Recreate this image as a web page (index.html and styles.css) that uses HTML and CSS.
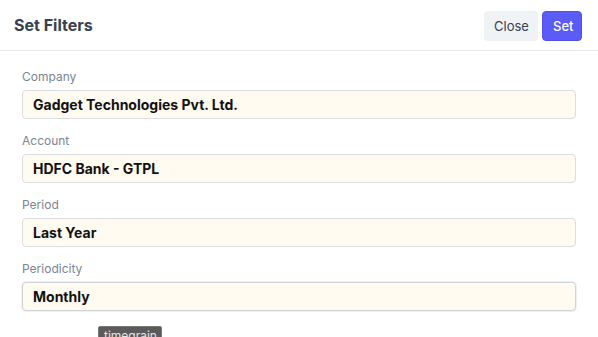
FILE: index.html
```html
<!DOCTYPE html>
<html lang="en">
<head>
  <meta charset="UTF-8" />
  <title>Set Filters</title>
  <link rel="stylesheet" href="styles.css">
</head>
<body>
  <div class="modal">
    <div class="modal-header">
      <h2>Set Filters</h2>
      <div class="actions">
        <button class="btn btn-close">Close</button>
        <button class="btn btn-set">Set</button>
      </div>
    </div>
    <div class="modal-body">
      <div class="field">
        <label>Company</label>
        <div class="input">Gadget Technologies Pvt. Ltd.</div>
      </div>
      <div class="field">
        <label>Account</label>
        <div class="input">HDFC Bank - GTPL</div>
      </div>
      <div class="field">
        <label>Period</label>
        <div class="input">Last Year</div>
      </div>
      <div class="field">
        <label>Periodicity</label>
        <div class="input focused">Monthly</div>
      </div>
    </div>
    <div class="tooltip">timegrain</div>
  </div>
</body>
</html>
```

FILE: styles.css
```css
body {
  margin: 0;
  font-family: Inter, 'Liberation Sans', sans-serif;
  background: #fff;
  width: 598px;
  height: 337px;
  overflow: hidden;
}
.modal {
  position: relative;
  height: 337px;
}
.modal-header {
  height: 50px;
  border-bottom: 1px solid #e5e7eb;
  display: flex;
  align-items: center;
  justify-content: space-between;
  padding: 0 16px 0 14px;
}
.modal-header h2 {
  margin: 0;
  font-size: 16px;
  font-weight: 700;
  color: #374151;
}
.actions {
  display: flex;
  gap: 4px;
  margin-top: 1px;
}
.btn {
  font-family: inherit;
  font-size: 13px;
  height: 30px;
  border-radius: 4px;
  border: none;
  padding: 0 10px;
}
.btn-close {
  background: #f0f3f6;
  color: #374151;
  width: 54px;
}
.btn-set {
  background: #5b5cf7;
  color: #fff;
  font-weight: 500;
  width: 40px;
  border: 1px solid #4f50e6;
}
.modal-body {
  padding: 17px 22px 0 22px;
}
.field {
  margin-bottom: 13px;
}
.field label {
  display: block;
  font-size: 12px;
  line-height: 18px;
  color: #7c8593;
  margin-bottom: 4px;
}
.input {
  height: 27px;
  line-height: 27px;
  background: #fffbf0;
  border: 1px solid #dadde2;
  border-radius: 4px;
  padding: 0 10px;
  font-size: 14px;
  font-weight: 700;
  color: #111;
}
.input.focused {
  border-color: #d0d4da;
  box-shadow: 0 0 0 1px #eef0f3;
}
.tooltip {
  position: absolute;
  left: 98px;
  top: 326px;
  width: 52px;
  background: #5b5b5b;
  color: #e6e6e6;
  font-size: 12px;
  padding: 1px 5px;
  border-radius: 2px;
  border: 1px solid #777;
}
```
